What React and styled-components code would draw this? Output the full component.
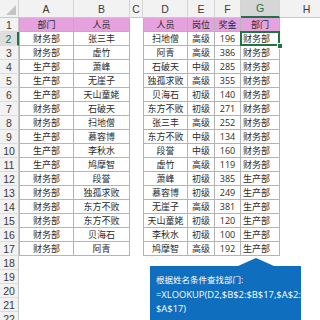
import React from 'react';
import styled, { createGlobalStyle, css } from 'styled-components';

const GlobalStyle = createGlobalStyle`
  html, body {
    margin: 0;
    padding: 0;
    background: #fff;
  }
`;

const GREEN = '#217346';
const LINE = '#b4b4b4';

// column widths: row header, A..H
const COLS = [19, 55, 56, 13, 45, 27, 26, 39, 54];
const LETTERS = ['A', 'B', 'C', 'D', 'E', 'F', 'G', 'H'];

const Sheet = styled.div`
  position: relative;
  width: 320px;
  height: 320px;
  overflow: hidden;
  font-family: "Open Sans", "Noto Sans CJK SC", sans-serif;
`;

const Grid = styled.div`
  display: grid;
  grid-template-columns: ${COLS.map((w) => `${w}px`).join(' ')};
  grid-template-rows: 18px repeat(22, 14px);
  width: 334px;
`;

const Corner = styled.div`
  position: relative;
  background: #f2f2f2;
  border-right: 1px solid #d4d4d4;
  border-bottom: 1px solid #c8c8c8;

  &::after {
    content: '';
    position: absolute;
    right: 2px;
    bottom: 2px;
    border-left: 10px solid transparent;
    border-bottom: 10px solid #c4c4c4;
  }
`;

const ColHead = styled.div`
  display: flex;
  align-items: center;
  justify-content: center;
  box-sizing: border-box;
  background: ${(p) => (p.$active ? '#d6d6d6' : '#f2f2f2')};
  color: ${(p) => (p.$active ? GREEN : '#3a3a3a')};
  border-right: 1px solid #d4d4d4;
  border-bottom: ${(p) => (p.$active ? `2px solid ${GREEN}` : '1px solid #c8c8c8')};
  font-family: "Liberation Sans", sans-serif;
  font-size: 10.5px;
`;

const RowHead = styled.div`
  display: flex;
  align-items: center;
  justify-content: center;
  box-sizing: border-box;
  background: ${(p) => (p.$active ? '#dedede' : '#f2f2f2')};
  color: ${(p) => (p.$active ? GREEN : '#3a3a3a')};
  border-bottom: 1px solid #dcdcdc;
  border-right: ${(p) => (p.$active ? `2px solid ${GREEN}` : '1px solid #c8c8c8')};
  font-family: "Liberation Sans", sans-serif;
  font-size: 10.5px;
`;

const Blank = styled.div`
  background: #fff;
`;

const Cell = styled.div`
  position: relative;
  display: flex;
  align-items: center;
  justify-content: ${(p) => (p.$align === 'left' ? 'flex-start' : 'center')};
  box-sizing: border-box;
  padding: 0 2px;
  background: ${(p) => (p.$head ? '#e5a2de' : '#fff')};
  color: #2b2b2b;
  font-size: 9px;
  white-space: nowrap;
  border-right: 1px solid ${LINE};
  border-bottom: 1px solid ${LINE};
  ${(p) => p.$edge && css`border-left: 1px solid ${LINE};`}

  ${(p) =>
    p.$selected &&
    css`
      &::after {
        content: '';
        position: absolute;
        left: -1px;
        top: -1px;
        right: -1px;
        bottom: -1px;
        border: 2px solid ${GREEN};
        z-index: 2;
      }
      &::before {
        content: '';
        position: absolute;
        right: -4px;
        bottom: -4px;
        width: 4px;
        height: 4px;
        background: ${GREEN};
        border: 1px solid #fff;
        z-index: 3;
      }
    `}
`;

const Callout = styled.div`
  position: absolute;
  left: 150px;
  top: 266px;
  width: 151px;
  height: 70px;
  box-sizing: border-box;
  padding: 7px 0 0 6px;
  background: #106ebe;
  color: #fff;
  font-size: 8.5px;
  line-height: 14.5px;
  white-space: nowrap;

  &::before {
    content: '';
    position: absolute;
    left: 88px;
    top: -8px;
    width: 36px;
    height: 8px;
    background: #106ebe;
    clip-path: polygon(0 100%, 50% 0, 100% 100%);
  }
`;

const Formula = styled.span`
  font-size: 9.4px;
`;

const LEFT = [
  ['部门', '人员'],
  ['财务部', '张三丰'],
  ['财务部', '虚竹'],
  ['生产部', '萧峰'],
  ['生产部', '无崖子'],
  ['生产部', '天山童姥'],
  ['财务部', '石破天'],
  ['财务部', '扫地僧'],
  ['生产部', '慕容博'],
  ['生产部', '李秋水'],
  ['生产部', '鸠摩智'],
  ['财务部', '段誉'],
  ['财务部', '独孤求败'],
  ['财务部', '东方不败'],
  ['财务部', '东方不败'],
  ['财务部', '贝海石'],
  ['财务部', '阿青'],
];

const RIGHT = [
  ['人员', '岗位', '奖金', '部门'],
  ['扫地僧', '高级', '196', '财务部'],
  ['阿青', '高级', '386', '财务部'],
  ['石破天', '中级', '285', '财务部'],
  ['独孤求败', '高级', '355', '财务部'],
  ['贝海石', '初级', '140', '财务部'],
  ['东方不败', '初级', '271', '财务部'],
  ['张三丰', '高级', '252', '财务部'],
  ['东方不败', '中级', '134', '财务部'],
  ['段誉', '中级', '160', '财务部'],
  ['虚竹', '高级', '119', '财务部'],
  ['萧峰', '初级', '385', '生产部'],
  ['慕容博', '初级', '249', '生产部'],
  ['无崖子', '高级', '381', '生产部'],
  ['天山童姥', '初级', '120', '生产部'],
  ['李秋水', '初级', '100', '生产部'],
  ['鸠摩智', '高级', '192', '生产部'],
];

const renderRow = (r) => {
  const i = r - 1;
  const head = r === 1;
  const cells = [<RowHead key="h" $active={r === 2}>{r}</RowHead>];

  if (i < LEFT.length) {
    cells.push(
      <Cell key="a" $edge $head={head}>{LEFT[i][0]}</Cell>,
      <Cell key="b" $head={head}>{LEFT[i][1]}</Cell>
    );
  } else {
    cells.push(<Blank key="a" />, <Blank key="b" />);
  }

  cells.push(<Blank key="c" />);

  if (i < RIGHT.length) {
    const [d, e, f, g] = RIGHT[i];
    cells.push(
      <Cell key="d" $edge $head={head}>{d}</Cell>,
      <Cell key="e" $head={head}>{e}</Cell>,
      <Cell key="f" $head={head}>{f}</Cell>,
      <Cell key="g" $head={head} $align={head ? 'center' : 'left'} $selected={r === 2}>
        {g}
      </Cell>
    );
  } else {
    cells.push(<Blank key="d" />, <Blank key="e" />, <Blank key="f" />, <Blank key="g" />);
  }

  cells.push(<Blank key="hcol" />);
  return <React.Fragment key={r}>{cells}</React.Fragment>;
};

export default function App() {
  const rows = [];
  for (let r = 1; r <= 22; r++) rows.push(renderRow(r));

  return (
    <Sheet>
      <GlobalStyle />
      <Grid>
        <Corner />
        {LETTERS.map((l) => (
          <ColHead key={l} $active={l === 'G'}>{l}</ColHead>
        ))}
        {rows}
      </Grid>
      <Callout>
        根据姓名条件查找部门:
        <br />
        <Formula>=XLOOKUP(D2,$B$2:$B$17,$A$2:</Formula>
        <br />
        <Formula>$A$17)</Formula>
      </Callout>
    </Sheet>
  );
}
